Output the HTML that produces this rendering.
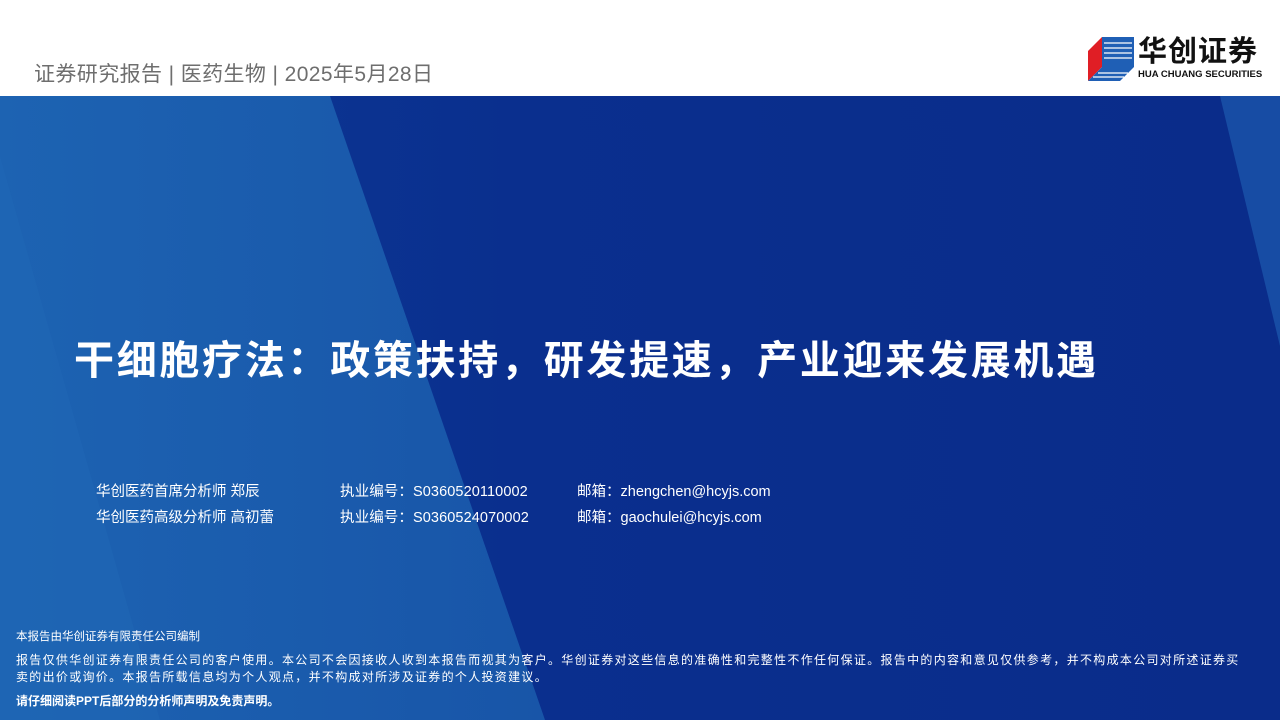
<!DOCTYPE html>
<html><head><meta charset="utf-8"><style>
*{margin:0;padding:0;box-sizing:border-box}
body{width:1280px;height:720px;overflow:hidden;background:#fff;font-family:"Liberation Sans","Noto Sans CJK SC",sans-serif;position:relative}
.hdr{position:absolute;left:34px;top:58px;font-size:21px;color:#6e6e6e;letter-spacing:0.4px;white-space:nowrap}
.t{position:absolute;color:#fff}
</style></head><body>
<div class="hdr">证券研究报告 | 医药生物 | 2025年5月28日</div>
<svg style="position:absolute;left:1088px;top:37px" width="46" height="44" viewBox="0 0 46 44">
<polygon points="0,14 14,0 14,30 0,44" fill="#e01e25"/>
<polygon points="14,0 46,0 46,30 14,30" fill="#1f5fb5"/>
<polygon points="0,44 14,30 46,30 32,44" fill="#1f5fb5"/>
<g stroke="#fff" stroke-width="1.3">
<line x1="16" y1="6" x2="44" y2="6"/><line x1="16" y1="11" x2="44" y2="11"/><line x1="16" y1="16" x2="44" y2="16"/><line x1="16" y1="21" x2="44" y2="21"/>
<line x1="10" y1="36" x2="40" y2="36"/><line x1="5" y1="40" x2="36" y2="40"/>
</g></svg>
<div class="t" style="left:1138px;top:36px;font-size:29px;font-weight:bold;color:#111;letter-spacing:1px;line-height:32px">华创证券</div>
<div class="t" style="left:1138px;top:69px;font-size:9.5px;font-weight:bold;color:#111;white-space:nowrap">HUA CHUANG SECURITIES</div>
<svg style="position:absolute;left:0;top:96px" width="1280" height="624" viewBox="0 0 1280 624">
<defs>
<linearGradient id="d" x1="0" y1="0" x2="1" y2="0">
<stop offset="0" stop-color="#0d3a96"/><stop offset="0.4" stop-color="#0a2f8e"/><stop offset="1" stop-color="#0a2c8a"/></linearGradient>
<linearGradient id="l" x1="0" y1="0" x2="1" y2="0">
<stop offset="0" stop-color="#1d63b2"/><stop offset="1" stop-color="#1855a8"/></linearGradient>
</defs>
<rect width="1280" height="624" fill="url(#d)"/>
<polygon points="0,0 330,0 545,624 0,624" fill="url(#l)"/>
<polygon points="0,60 160,624 0,624" fill="#2068b6" opacity="0.5"/>
<polygon points="1220,0 1280,0 1280,250" fill="#1a55aa" opacity="0.8"/>
</svg>
<div class="t" style="left:74px;top:328px;font-size:40px;font-weight:bold;letter-spacing:2.7px;white-space:nowrap">干细胞疗法：政策扶持，研发提速，产业迎来发展机遇</div>
<div class="t" style="left:96px;top:479px;font-size:14.5px;line-height:26px;white-space:nowrap">华创医药首席分析师 郑辰<br>华创医药高级分析师 高初蕾</div>
<div class="t" style="left:340px;top:479px;font-size:14.5px;line-height:26px;white-space:nowrap;letter-spacing:0.1px">执业编号：S0360520110002<br>执业编号：S0360524070002</div>
<div class="t" style="left:577px;top:479px;font-size:14.5px;line-height:26px;white-space:nowrap">邮箱：zhengchen@hcyjs.com<br>邮箱：gaochulei@hcyjs.com</div>
<div class="t" style="left:16px;top:628px;font-size:11.5px;white-space:nowrap">本报告由华创证券有限责任公司编制</div>
<div class="t" style="left:16px;top:652px;font-size:12px;line-height:17px;white-space:nowrap;letter-spacing:1.3px">报告仅供华创证券有限责任公司的客户使用。本公司不会因接收人收到本报告而视其为客户。华创证券对这些信息的准确性和完整性不作任何保证。报告中的内容和意见仅供参考，并不构成本公司对所述证券买<br>卖的出价或询价。本报告所载信息均为个人观点，并不构成对所涉及证券的个人投资建议。</div>
<div class="t" style="left:16px;top:692px;font-size:12px;font-weight:bold;white-space:nowrap">请仔细阅读PPT后部分的分析师声明及免责声明。</div>
</body></html>
